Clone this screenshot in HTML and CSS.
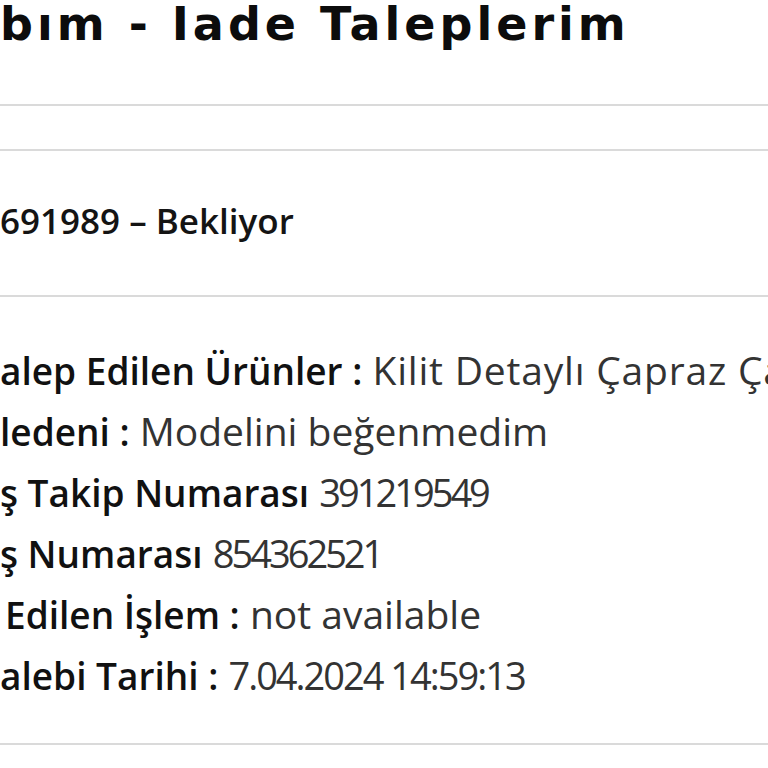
FILE: index.html
```html
<!DOCTYPE html>
<html lang="tr">
<head>
  <meta charset="UTF-8">
  <meta name="viewport" content="width=device-width, initial-scale=1.0">
  <title>Iade Taleplerim</title>
  <link rel="stylesheet" href="styles.css">
</head>
<body>
  <div class="page">
    <h1 class="title">bım - Iade Taleplerim</h1>
    <div class="spacer"></div>
    <div class="order-head">
      <h2>691989 – Bekliyor</h2>
    </div>
    <ul class="details">
      <li><b>alep Edilen Ürünler :</b> <span class="wide">Kilit Detaylı Çapraz Çanta</span></li>
      <li><b>ledeni :</b> Modelini beğenmedim</li>
      <li><b>ş Takip Numarası</b> <span class="num">391219549</span></li>
      <li><b>ş Numarası</b> <span class="num">854362521</span></li>
      <li class="shift"><b>Edilen İşlem :</b> not available</li>
      <li><b>alebi Tarihi :</b> <span class="num date">7.04.2024 14:59:13</span></li>
    </ul>
  </div>
</body>
</html>
```

FILE: styles.css
```css
* {
  margin: 0;
  padding: 0;
  box-sizing: border-box;
}
body {
  background: #fff;
  color: #111;
  overflow: hidden;
}
.page {
  width: 768px;
  height: 768px;
}
.title {
  font-family: "DejaVu Sans", sans-serif;
  font-size: 46px;
  font-weight: bold;
  letter-spacing: 4px;
  line-height: 48px;
  height: 104px;
  white-space: nowrap;
  overflow: hidden;
  color: #0c0c0c;
}
.spacer {
  height: 47px;
  border-top: 2px solid #dadada;
  border-bottom: 2px solid #dadada;
}
.order-head {
  height: 146px;
  padding-top: 50px;
  border-bottom: 2px solid #dadada;
}
.order-head h2 {
  font-family: "Open Sans", sans-serif;
  font-size: 35px;
  font-weight: 600;
  line-height: 40px;
  white-space: nowrap;
  color: #141414;
}
.details {
  list-style: none;
  height: 448px;
  padding-top: 43px;
  border-bottom: 2px solid #dadada;
}
.details li {
  font-family: "Open Sans", sans-serif;
  font-size: 39px;
  line-height: 60px;
  white-space: nowrap;
  overflow: hidden;
  color: #333;
}
.details b {
  font-size: 37px;
  font-weight: 600;
  color: #111;
}
.details .wide {
  letter-spacing: 0.8px;
}
.details .num {
  font-size: 38px;
  letter-spacing: -3px;
}
.details .date {
  letter-spacing: -2px;
}
.details .shift {
  padding-left: 5px;
}
```
